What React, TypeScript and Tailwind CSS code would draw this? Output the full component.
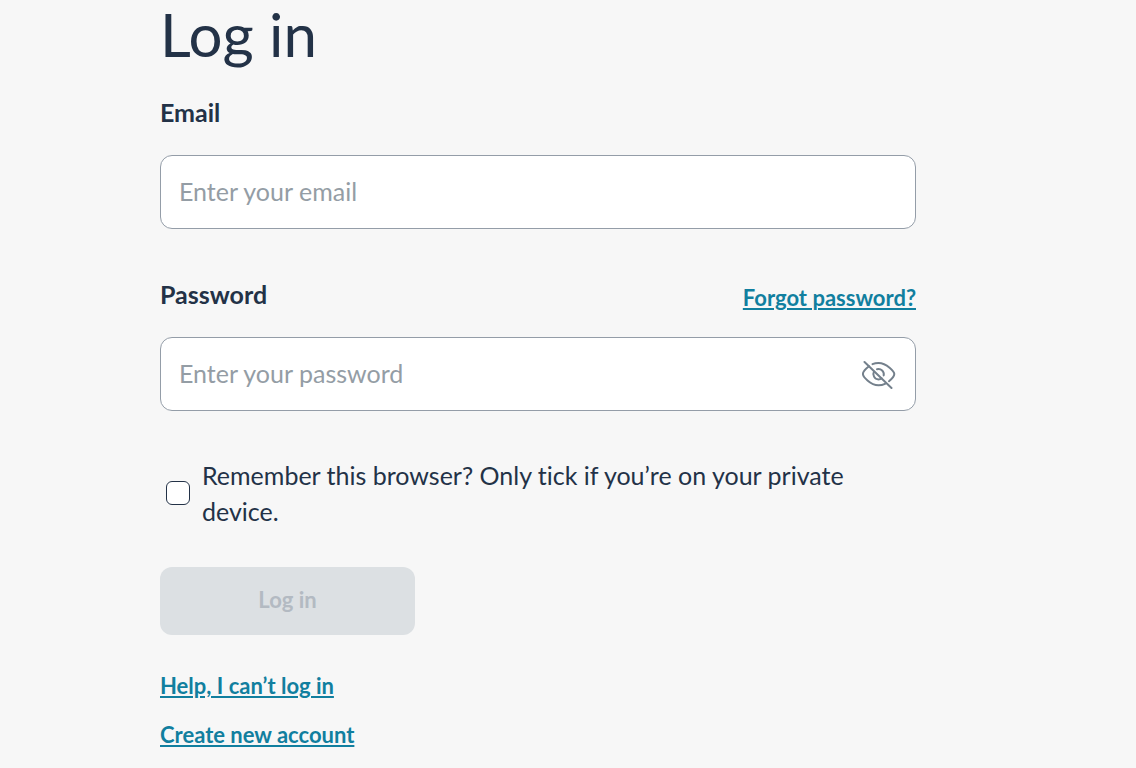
import React, { useState } from 'react';

function EyeOffIcon() {
  return (
    <svg width="34" height="30" viewBox="0 -1 34 30" fill="none" stroke="#74808c" strokeWidth="2" strokeLinecap="round" strokeLinejoin="round" aria-hidden="true">
      <path d="M7 6.200C4 8.500 0.900 12.300 0.900 14C0.900 16.300 8 25.300 16.500 25.300C19 25.300 21.200 24.700 23 23.800" />
      <path d="M10.500 4.200C12.300 3.400 14.200 3 16.500 3C25 3 32.300 12 32.300 14C32.300 15.600 29.700 19 27 21.200" />
      <path d="M12 11.500C10.200 14.700 12.400 19.400 16.500 19.400C17.800 19.400 18.800 19 19.700 18.300" />
      <path d="M15 9.200C19 8.200 22.500 11.400 21.700 15.400" />
      <path d="M2.500 2L29.500 28" />
    </svg>
  );
}

const link = "text-[22px] leading-6 font-bold text-[#117f9f] underline decoration-2 underline-offset-2";
const label = "text-[25px] leading-8 font-bold";
const field = 'h-[74px] w-full rounded-xl border border-[#949da8] bg-white pb-0.5 pl-[18px] text-[25px] text-[#233247] placeholder:text-[#949da5]';

export default function App() {
  const [email, setEmail] = useState('');
  const [password, setPassword] = useState('');
  const [visible, setVisible] = useState(false);
  const empty = !email || !password;

  return (
    <main className="min-h-screen bg-[#f7f7f7] px-40 pb-5 font-['Lato',sans-serif] text-[#233247] [font-variant-ligatures:none]">
      <form className="flex max-w-[756px] flex-col" onSubmit={(e) => e.preventDefault()}>
        <h1 className="text-6xl leading-[68px]">Log in</h1>
        <label htmlFor="email" className={`mt-7 ${label}`}>Email</label>
        <input id="email" type="email" placeholder="Enter your email" value={email} onChange={(e) => setEmail(e.target.value)} className={`mt-[27px] ${field} pr-[18px]`} />
        <div className="mt-[49px] flex items-end justify-between">
          <label htmlFor="password" className={label}>Password</label>
          <a href="#forgot" className={link}>Forgot password?</a>
        </div>
        <div className="relative mt-[27px]">
          <input id="password" type={visible ? 'text' : 'password'} placeholder="Enter your password" value={password} onChange={(e) => setPassword(e.target.value)} className={`block ${field} pr-16`} />
          <button type="button" aria-label="Show password" onClick={() => setVisible(!visible)} className="absolute inset-y-0 right-5 flex items-center"><EyeOffIcon /></button>
        </div>
        <label className="mt-[46px] flex items-center gap-3 pl-1.5 text-[25px] leading-9">
          <input type="checkbox" className="size-6 shrink-0 appearance-none rounded-md border border-[#233247] bg-white checked:bg-[#117f9f]" />
          <span>Remember this browser? Only tick if you’re on your private device.</span>
        </label>
        <button type="submit" disabled={empty} className="mt-[38px] h-[68px] w-[255px] rounded-xl bg-[#117f9f] pb-1 text-[22px] font-bold text-white disabled:bg-[#dce0e3] disabled:text-[#b3bac2]">Log in</button>
        <a href="#help" className={`mt-[39px] self-start ${link}`}>Help, I can’t log in</a>
        <a href="#create" className={`mt-[25px] self-start ${link}`}>Create new account</a>
      </form>
    </main>
  );
}
